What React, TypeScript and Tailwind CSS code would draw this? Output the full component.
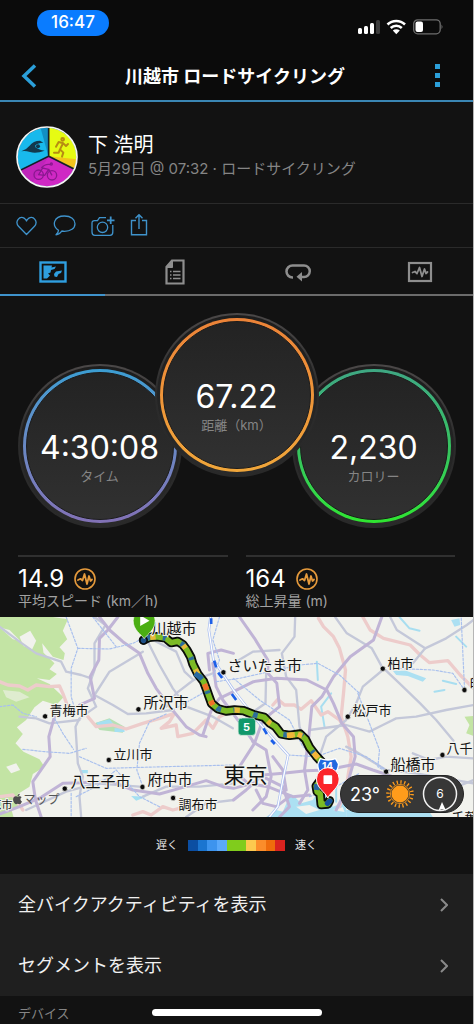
import React from 'react';
import { FaApple } from 'react-icons/fa';

const PACE_COLORS = [
  'bg-[#0b4ea2]',
  'bg-[#1b75d0]',
  'bg-[#3d94ee]',
  'bg-[#5aa9fb]',
  'bg-[#80cc1c]',
  'bg-[#80cc1c]',
  'bg-[#fcc94f]',
  'bg-[#fb8d2a]',
  'bg-[#ef6c0c]',
  'bg-[#d9231f]',
];

const CITIES = [
  { name: '川越市', x: 152, y: 17, size: 15 },
  { name: 'さいたま市', x: 228, y: 54, size: 15 },
  { name: '青梅市', x: 50, y: 98, size: 13 },
  { name: '所沢市', x: 144, y: 91, size: 15 },
  { name: '立川市', x: 114, y: 142, size: 13 },
  { name: '八王子市', x: 71, y: 170, size: 15 },
  { name: '府中市', x: 148, y: 168, size: 15 },
  { name: '調布市', x: 179, y: 192, size: 13 },
  { name: '東京', x: 224, y: 166, size: 22 },
  { name: '柏市', x: 388, y: 51, size: 13 },
  { name: '松戸市', x: 353, y: 98, size: 13 },
  { name: '船橋市', x: 391, y: 153, size: 15 },
  { name: '八千', x: 447, y: 136, size: 13 },
  { name: '印西市', x: 470, y: 71, size: 13 },
  { name: '千葉市', x: 452, y: 205, size: 13 },
  { name: '原市', x: -9, y: 192, size: 11 },
];

const CITY_DOTS = [
  [137, 319], [417, 298], [328, 450], [196, 536], [429, 531], [521, 564], [672, 187],
  [1150, 176], [1045, 320], [1329, 435], [1160, 485], [1395, 240],
];

const EXPRESSWAYS = [
  'M300 21 L330 60 370 95 420 130 445 190 470 235 515 295 560 350 600 375 620 380',
  'M355 21 L325 60 300 85 298 150 272 200 285 265 240 285',
  'M165 320 L148 380 152 440 100 515 108 570 125 621',
  'M0 612 L60 590 125 562 190 520 250 518 330 512 400 540 480 552 540 535 620 512 670 530 702 535 760 520',
  'M610 375 L632 310 640 290 660 265 702 245 762 215 832 205 922 210 982 240 1002 280 1027 340 1062 380 1067 440 1050 500 1040 540 1010 600',
  'M1147 21 L1122 90 1052 140 1002 200 967 260 937 290 928 380 915 480 925 540 900 580',
  'M720 21 L765 85 805 150 805 190 832 220 840 290 790 330 765 400 720 470',
  'M630 180 L625 130 665 120 702 130',
  'M640 160 L650 230 670 270 730 350 765 400',
  'M702 570 L740 540 790 495 850 490 920 482 980 480 1070 462 1120 480 1180 500 1250 520',
  'M760 395 L800 420 815 500 800 560 760 600',
  'M702 480 L745 520 805 530 880 560 930 555',
  'M800 505 L850 530 870 590 840 621',
  'M820 440 L850 480 860 540',
  'M770 540 L790 580 830 590 870 560',
];

const ROADS = [
  'M0 50 L60 95 110 130 185 155 200 185 245 195 275 205',
  'M285 21 L318 45 285 100 285 180 265 235 290 290 240 325 228 350 235 460 250 500 240 560 245 621',
  'M430 125 L330 185 285 255 340 285 385 312 440 310 520 300',
  'M445 95 L480 165 520 235 560 290 640 320 700 355',
  'M460 90 L530 125 555 185 582 210 530 250 500 290',
  'M582 210 L640 190',
  'M60 320 L110 325 150 340 240 330',
  'M430 560 L500 530 600 530 702 520',
  'M80 600 L200 545 290 520 420 530',
  'M560 621 L620 580 702 570',
  'M887 21 L885 80 847 130 860 200 890 240 900 350 925 420',
  'M702 160 L760 125 840 120',
  'M1007 21 L1042 70 1117 115 1147 170 1200 220 1262 280 1310 330 1362 392',
  'M1172 21 L1192 60 1277 115 1340 85 1402 45 1422 30',
  'M1277 115 L1240 160',
  'M1422 285 L1340 300 1250 320 1190 325 1150 345 1110 365 1040 345 930 360',
  'M1150 180 L1090 230 1070 280 1040 330 980 380 960 440',
  'M1422 445 L1340 440 1290 450 1240 430',
  'M1040 410 L1070 425 1160 480 1250 490 1422 520',
  'M800 190 L798 280 740 320',
  'M1300 560 L1422 510',
];

const BORDERS = [
  'M0 215 L25 225 60 228 85 240 110 225 150 230 180 228 192 255 205 290',
  'M265 320 L290 350 340 345 380 357 430 340 480 325 525 310 510 335 485 355 530 345 535 380 580 370 620 330 640 355 660 320 702 300',
  'M820 285 L835 268 855 285 885 285 905 298 935 272 965 315 985 305 1020 330 1045 365',
  'M957 25 L972 50 1002 80 1020 115 1038 180 1032 250 1025 320 1045 380 1055 440 1042 520 1020 590',
  'M1090 21 L1112 60 1152 85 1232 105 1262 135 1290 158 1345 152 1382 195 1422 235',
  'M400 615 L430 605 455 615 490 590 520 600 560 590',
  'M0 560 L40 555 70 600',
];

const RAILWAYS = [
  'M200 21 L235 115 215 175 215 260 230 310',
  'M235 115 L330 117 400 100 430 85',
  'M0 290 L40 285 70 310 110 320',
  'M70 418 L135 425 210 430 260 415',
  'M165 325 L190 370 222 418',
  'M240 440 L320 475 500 470 702 465',
  'M500 312 L450 335 420 400 412 480 430 530',
  'M230 560 L290 530 350 480 420 560 480 590',
  'M520 300 L600 255 630 235',
  'M215 550 L215 621',
  'M660 21 L640 90 660 150 640 200',
  'M650 215 L720 205 900 165 955 160 1020 195 1080 250',
  'M1190 175 L1300 180 1360 190 1395 240',
  'M1395 235 L1385 21',
  'M1075 250 L1110 340 1140 420 1135 470 1160 485',
  'M702 205 L780 270 870 330 910 410 960 440',
  'M865 435 L950 440 1020 415 1100 440 1160 480',
  'M930 560 L1010 530 1080 490',
  'M280 21 L350 110',
];

const ROUTE =
  'M432 90 L450 82 470 80 498 84 515 98 535 94 550 104 562 120 574 142 580 162 595 192 612 214 620 235 628 258 636 280 655 296 680 303 705 300 732 302 762 314 794 322 812 340 828 350 845 372 870 376 902 372 918 388 930 412 950 438 972 462 985 485';

const ROUTE_END = 'M960 515 L950 528 953 545 962 552 965 584 985 582 990 572';

function StatusBar() {
  return (
    <div className="flex items-start justify-between pt-[10px] pr-[30px] pl-[37px]">
      <div className="flex h-[26px] w-[72px] items-center justify-center rounded-full bg-[#0a7cff] text-[17px] font-medium">
        16:47
      </div>
      <svg width="86" height="16" viewBox="0 0 86 16" className="mt-[9px]" aria-hidden="true">
        <rect x="1" y="9" width="4" height="6" rx="1.500" fill="#fff" />
        <rect x="7" y="7" width="4" height="8" rx="1.500" fill="#fff" />
        <rect x="13" y="4" width="4" height="11" rx="1.500" fill="#fff" />
        <rect x="19" y="1" width="4" height="14" rx="1.500" fill="#3c3c3c" />
        <g fill="none" stroke="#fff" strokeWidth="2.600">
          <path d="M30.500 5.500 a12.500 12.500 0 0 1 17.500 0" />
          <path d="M33.700 9 a8 8 0 0 1 11.100 0" />
        </g>
        <path d="M35.800 11.600 a5 5 0 0 1 7 0 L39.300 15.300z" fill="#fff" />
        <rect x="56.700" y="0.800" width="26.500" height="14" rx="4" fill="none" stroke="#6e6e6e" strokeWidth="1.300" />
        <rect x="58.500" y="2.500" width="7.500" height="10.500" rx="2" fill="#fff" />
        <path d="M84.500 5.500 q2 2.300 0 4.600z" fill="#6e6e6e" />
      </svg>
    </div>
  );
}

function Avatar() {
  return (
    <svg width="62" height="62" viewBox="0 0 186 186" className="shrink-0" aria-hidden="true">
      <defs>
        <clipPath id="avatar">
          <circle cx="93" cy="93" r="88" />
        </clipPath>
      </defs>
      <g clipPath="url(#avatar)">
        <rect width="186" height="186" fill="#19b9ec" />
        <path d="M72 0 L98 0 98 93 Z" fill="#128fc4" />
        <path d="M98 0 H186 V135 L98 91z" fill="#e6fb13" />
        <path d="M98 91 L186 100 V140z" fill="#f3c31c" />
        <path d="M98 91 L0 140 V186 H186 V135z" fill="#cf28c4" />
        <path d="M0 140 L98 91 40 186z" fill="#b622b4" opacity="0.600" />
        <path d="M98 0 V91 L0 139 M98 91 L186 135" fill="none" stroke="#15202a" strokeWidth="5" />
        <path
          d="M16 76 Q30 72 40 60 Q52 44 72 44 L82 50 Q66 50 58 58 Q56 66 66 68 Q74 72 86 74 Q60 84 42 78 Q28 74 16 76z"
          fill="#12384c"
        />
        <circle cx="66" cy="61" r="6" fill="#12384c" />
        <g stroke="#b78d12" strokeWidth="6" fill="none" strokeLinecap="round" strokeLinejoin="round">
          <circle cx="140" cy="40" r="4" />
          <path d="M120 62 L128 48 142 52 150 60 156 54 M140 54 L132 70 142 80 138 92 M132 70 L128 80 114 80" />
        </g>
        <g stroke="#8a1890" strokeWidth="4" fill="none">
          <circle cx="68" cy="146" r="14" />
          <circle cx="108" cy="148" r="14" />
          <path d="M68 146 L80 126 98 130 86 148z M98 130 L108 148 M76 126 Q88 112 104 116" />
          <circle cx="106" cy="114" r="3" />
        </g>
      </g>
      <circle cx="93" cy="93" r="90" fill="none" stroke="#f5f5f5" strokeWidth="5" />
    </svg>
  );
}

function PulseLine({ d }: { d: string }) {
  return <path d={d} fill="none" stroke="currentColor" strokeWidth="1.800" strokeLinejoin="round" strokeLinecap="round" />;
}

function ActionBar() {
  return (
    <div className="flex h-11 items-center gap-[15px] border-b border-[#2a2a2a] pl-[15px] text-[#3f93cc]">
      <button type="button" aria-label="いいね">
        <svg width="23" height="24" viewBox="0 0 23 24" fill="none" stroke="currentColor" strokeWidth="1.300">
          <path d="M11.500 20.500 L3.500 12.300 C-0.500 7.500 4.500 1 9.500 4.400 Q11 5.500 11.500 7 Q12 5.500 13.500 4.400 C18.500 1 23.500 7.500 19.500 12.300 z" strokeLinejoin="round" />
        </svg>
      </button>
      <button type="button" aria-label="コメント">
        <svg width="23" height="24" viewBox="0 0 23 24" fill="none" stroke="currentColor" strokeWidth="1.300">
          <path d="M5.500 16.300 C-1.500 11.500 0.500 2 11.500 2 C18 2 22 5.500 22 9.700 C22 14.500 17.500 17.300 11.500 17.300 Q10 17.300 8.800 17 Q6.500 20.500 3 20.800 Q5.500 18.800 5.500 16.300z" strokeLinejoin="round" />
        </svg>
      </button>
      <button type="button" aria-label="写真を追加">
        <svg width="24" height="24" viewBox="0 0 24 24" fill="none" stroke="currentColor" strokeWidth="1.300">
          <path d="M15 3.700 H8.500 L6.500 6.700 H3.500 Q1 6.700 1 9 V18 Q1 21.300 3.800 21.300 H19 Q21.800 21.300 21.800 18 V11" />
          <circle cx="11.500" cy="13.300" r="5.200" />
          <path d="M19.700 2.500 V10 M16 6.300 H23.500" strokeWidth="1.800" />
        </svg>
      </button>
      <button type="button" aria-label="共有">
        <svg width="18" height="24" viewBox="0 0 18 24" fill="none" stroke="currentColor" strokeWidth="1.400">
          <path d="M6 6.500 H1.500 V20.700 H16.500 V6.500 H12 M9 15 V1 M5.500 4.300 L9 0.700 12.500 4.300" />
        </svg>
      </button>
    </div>
  );
}

function Tabs() {
  return (
    <div role="tablist" className="flex h-12 justify-between border-b-2 border-[#6b6b6b] text-[#8e8e8e]">
      <button
        type="button"
        role="tab"
        aria-selected="true"
        aria-label="概要"
        className="-mb-[2px] flex w-[105px] items-center justify-center border-b-2 border-[#3f93cc] pt-[2px] text-[#2f9fe0]"
      >
        <svg width="28" height="22" viewBox="0 0 28 22">
          <rect x="1.500" y="1.500" width="25" height="19" fill="none" stroke="currentColor" strokeWidth="2.400" />
          <path d="M4.500 4.500 H13 L12.500 6.500 17 5.500 15.500 8 12 9 11.500 11.500 9 12.500 11 14.500 8 17.500 H4.500z" fill="currentColor" />
          <path d="M15 13 L17 10.500 23 9.500 22 12 19.500 13 18 16 15.500 15.500z" fill="currentColor" />
        </svg>
      </button>
      <button type="button" role="tab" aria-selected="false" aria-label="詳細" className="flex w-[105px] items-center justify-center pt-[2px]">
        <svg width="20" height="26" viewBox="0 0 20 26" fill="none" stroke="currentColor">
          <path d="M7 1.500 H18.500 V24.500 H1.500 V8z" strokeWidth="2.200" />
          <path d="M1.500 8.500 L7.500 1.500 V8.500z" fill="currentColor" />
          <path d="M5 12.500 H6.500 M8 12.500 H15.500 M5 16 H6.500 M8 16 H15.500 M5 19.500 H6.500 M8 19.500 H15.500" strokeWidth="1.700" />
        </svg>
      </button>
      <button type="button" role="tab" aria-selected="false" aria-label="ラップ" className="flex w-[105px] items-center justify-center pt-[2px]">
        <svg width="26" height="20" viewBox="0 0 26 20" fill="none" stroke="currentColor">
          <path d="M8 15.500 H7.500 A5.600 5.600 0 0 1 7.500 3.500 H19 A5.600 5.600 0 0 1 19 15 H15" strokeWidth="2.500" />
          <path d="M17 10 V19.500 L11.500 14.800z" fill="currentColor" stroke="none" />
        </svg>
      </button>
      <button type="button" role="tab" aria-selected="false" aria-label="グラフ" className="flex w-[105px] items-center justify-center pt-[2px]">
        <svg width="26" height="22" viewBox="0 0 26 22">
          <rect x="2" y="2" width="22" height="18" fill="none" stroke="currentColor" strokeWidth="2.200" />
          <PulseLine d="M5.500 11.500 L8 10.500 10 12.500 12.500 6.500 15 15.500 17.500 8 19 12.500 20.500 11" />
        </svg>
      </button>
    </div>
  );
}

interface GaugeProps {
  value: string;
  label: string;
  ring: string;
  className: string;
}

function Gauge({ value, label, ring, className }: GaugeProps) {
  return (
    <div className={`size-[164px] shrink-0 rounded-full bg-linear-to-b from-[#4b4848] via-[#2b2b2b] to-[#292929] p-[2px] ${className}`}>
      <div className="size-full rounded-full bg-linear-to-b from-[#1d1d1d] to-[#2a2a2a] p-[3px]">
        <div className={`size-full rounded-full bg-linear-to-b p-[3px] ${ring}`}>
          <div className="flex size-full flex-col items-center rounded-full border border-[#1b1b1b] bg-linear-to-b from-[#232323] to-[#313131] pt-[55px]">
            <span className="text-[32px] leading-10">{value}</span>
            <span className="text-[13px] leading-4 text-[#858585]">{label}</span>
          </div>
        </div>
      </div>
    </div>
  );
}

function Stat({ value, label }: { value: string; label: string }) {
  return (
    <div className="flex-1 border-t-2 border-[#303030] pt-2">
      <div className="flex items-center gap-[10px] text-[24px] leading-7">
        {value}
        <svg width="22" height="22" viewBox="0 0 22 22" className="text-[#e59a3c]" aria-hidden="true">
          <circle cx="11" cy="11" r="10" fill="none" stroke="currentColor" strokeWidth="1.600" />
          <PulseLine d="M4 12 L6.500 10.800 8.500 12.500 10.500 6 13 16 15 8 16.500 13 18 11.500" />
        </svg>
      </div>
      <div className="text-[14px] leading-4 text-[#a2a2a2]">{label}</div>
    </div>
  );
}

function RouteMap() {
  return (
    <svg viewBox="0 0 474 200" preserveAspectRatio="xMidYMid slice" className="h-[200px] w-full bg-[#f1f2ed]">
      <g transform="translate(0 -7) scale(0.33333)" fill="none" strokeLinejoin="round" strokeLinecap="round">
        <g fill="#c3e4a4">
          <path d="M0 21 H160 L205 28 190 62 203 88 180 112 196 130 192 150 160 140 128 100 132 128 165 160 150 178 172 192 150 210 112 205 150 222 192 262 170 285 130 272 105 292 80 330 52 352 70 372 48 400 72 425 120 448 135 470 100 492 90 530 55 552 66 585 36 600 42 621 H0z" />
          <path d="M1395 320 L1422 318 V378 L1400 370 1410 345z" />
        </g>
        <g fill="#f1f2ed">
          <path d="M60 80 L92 62 110 92 98 118 72 108z" />
          <path d="M10 240 L60 245 90 262 50 275 20 262z" opacity="0.600" />
          <path d="M0 52 L30 60 62 92 40 88z" />
          <path d="M20 470 L50 460 62 480 35 490z" />
        </g>
        <path d="M285 340 L330 325 375 350 370 368 300 360z" fill="#b8e0b4" />
        <path d="M290 338 L330 328 345 345 300 350z M345 355 H375 V366 H345z M395 558 L440 560 410 572z M245 480 h20 v10 h-20z" fill="#a5e0f2" />
        <g fill="#ace0f2">
          <path d="M800 621 L830 600 850 605 865 570 855 550 880 555 905 580 940 570 955 545 965 520 1000 590 1040 575 1040 621z" />
          <path d="M1040 600 L1100 600 1290 606 1300 621 H1040z" />
          <path d="M1180 182 L1220 182 1280 205 1270 215 1225 198 1190 195z" />
          <path d="M1355 30 L1380 25 1382 45 1365 50z" />
        </g>
        <g stroke="#a8def0" strokeWidth="6">
          <path d="M952 155 L955 210 M995 250 L965 290 975 350 M1200 21 L1230 55 1260 62 M1305 245 L1335 240 M1330 212 L1370 222 M1370 80 L1400 110" />
          <path d="M1010 575 L1010 500" />
        </g>
        <path d="M890 590 L930 585 960 600 920 612z M1000 600 L1030 592 1035 606z" fill="#f1f2ed" />
        <g stroke="#edcccb" strokeWidth="10">
          {BORDERS.map((d) => <path key={d} d={d} />)}
        </g>
        <g stroke="#c4c8d9" strokeWidth="7">
          {ROADS.map((d) => <path key={d} d={d} />)}
        </g>
        <g stroke="#c0b4d6" strokeWidth="9">
          {EXPRESSWAYS.map((d) => <path key={d} d={d} />)}
        </g>
        <g stroke="#a9c0ee" strokeWidth="3.500" strokeDasharray="7 5">
          {RAILWAYS.map((d) => <path key={d} d={d} />)}
        </g>
        <path d="M633 21 L628 60 642 150 702 240 780 340 866 435 850 510 835 590 810 621" stroke="#a8bdf0" strokeWidth="8" />
        <path d="M633 21 L628 60 642 150 702 240 780 340 866 435 850 510 835 590 810 621" stroke="#fff" strokeWidth="4" />
        <path d="M635 25 V42 M644 152 L650 172 M656 188 L668 204 M697 252 L710 270 M792 355 L802 372 M815 390 L826 402" stroke="#1c5fe8" strokeWidth="8" strokeLinecap="butt" />

        <g stroke="#0a0d0a" strokeWidth="28">
          <path d={ROUTE} />
          <path d={ROUTE_END} />
        </g>
        <g stroke="#7cbb25" strokeWidth="17">
          <path d={ROUTE} />
          <path d={ROUTE_END} />
        </g>
        <g strokeWidth="16" strokeLinecap="butt">
          <path d={ROUTE} stroke="#2d6d9a" strokeDasharray="9 52 14 38" strokeDashoffset="-60" />
          <path d={ROUTE} stroke="#e8b93a" strokeDasharray="12 70 16 92" strokeDashoffset="-130" />
          <path d="M615 222 L622 240 M634 272 L640 285" stroke="#f0702a" />
          <path d="M586 190 L606 205 M952 522 L951 540" stroke="#2a68a0" />
          <path d="M862 376 L880 375 M895 373 L908 378 M942 428 L956 444" stroke="#f3b53a" />
        </g>
        <circle cx="432" cy="91" r="11" fill="#1d4f86" stroke="#0a0d0a" strokeWidth="5" />
        <path d="M984 580 L991 573" stroke="#174f9c" strokeWidth="16" />

        <g fill="#0b0b0b" stroke="#f1f2ed" strokeWidth="2">
          {CITY_DOTS.map(([x, y]) => <circle key={x} cx={x} cy={y} r="8" />)}
        </g>

        <rect x="716" y="324" width="52" height="52" rx="10" fill="#11986a" stroke="#d6eadf" strokeWidth="2" />
        <path d="M962 446 Q986 454 1008 446 L1017 462 Q1016 480 1004 492 L986 502 966 492 Q954 480 955 462z" fill="#2168e0" stroke="#fff" strokeWidth="4" />
      </g>

      <text x="328" y="153" textAnchor="middle" className="fill-white font-bold" fontSize="10">14</text>
      <text x="247" y="114" textAnchor="middle" className="fill-white font-bold" fontSize="11">5</text>
      <g stroke="#f1f2ed" strokeWidth="2" paintOrder="stroke" className="fill-[#141414]">
        {CITIES.map((city) => (
          <text key={city.name} x={city.x} y={city.y} fontSize={city.size}>{city.name}</text>
        ))}
      </g>
      <FaApple x="12" y="176" size={12} color="#4c4c4c" />
      <text x="24" y="187" fontSize="12" className="fill-[#555]">マップ</text>

      <g transform="translate(0 -7) scale(0.33333)">
        <path d="M434 86 C424 72 401 60 401 32 A33 33 0 0 1 467 32 C467 60 444 72 434 86z" fill="#4aae12" stroke="#fff" strokeWidth="2" />
        <path d="M422 16 L450 32 422 48z" fill="#fff" />
        <path d="M985 564 C975 544 951 534 951 507 A34 34 0 0 1 1019 507 C1019 534 995 544 985 564z" fill="#fb2429" stroke="#fff" strokeWidth="3" />
        <rect x="972" y="496" width="26" height="26" rx="2" fill="#fff" />
      </g>
    </svg>
  );
}

function WeatherBadge() {
  return (
    <div className="absolute right-[9px] bottom-1 flex h-[38px] w-[124px] items-center gap-[5px] rounded-full border border-[#242424] bg-[#373737] pl-[9px]">
      <span className="text-[18px]">23°</span>
      <svg width="30" height="30" viewBox="0 0 30 30" aria-hidden="true">
        <circle cx="15" cy="15" r="8.500" fill="#ff9c1b" />
        <circle cx="15" cy="15" r="9.600" fill="none" stroke="#ff9c1b" strokeWidth="0.800" />
        <circle cx="15" cy="15" r="12" fill="none" stroke="#ff9c1b" strokeWidth="3.600" strokeDasharray="1.300 2.470" />
      </svg>
      <svg width="36" height="36" viewBox="0 0 36 36" className="ml-[2px]" aria-hidden="true">
        <circle cx="18" cy="18" r="16.500" fill="none" stroke="#f2f2f2" strokeWidth="1.500" />
        <path d="M20 26 L24 34.500 20 33 16.500 34.500z" fill="#fff" />
        <text x="18" y="22" textAnchor="middle" fontSize="12" fill="#fff">6</text>
      </svg>
    </div>
  );
}

function LinkRow({ label }: { label: string }) {
  return (
    <a href="#" className="flex h-[61px] items-center justify-between pr-[25px] pl-[18px] text-[18px] text-[#f0f0f0]">
      {label}
      <svg width="8" height="14" viewBox="0 0 8 14" fill="none" stroke="#8a8a8a" strokeWidth="2" aria-hidden="true">
        <path d="M1 1 L7 7 1 13" />
      </svg>
    </a>
  );
}

export default function App() {
  return (
    <div className="min-h-screen border-r border-[#b5b5b5] bg-[#121212] font-['Inter','Noto_Sans_CJK_JP',sans-serif] text-white">
      <header className="h-[102px] border-b-2 border-[#3a86b4] bg-[#0b0b0b]">
        <StatusBar />
        <div className="mt-[22px] flex h-9 items-center justify-between pr-7 pl-[21px]">
          <button type="button" aria-label="戻る">
            <svg width="16" height="24" viewBox="0 0 16 24" fill="none" stroke="#2b9fd9" strokeWidth="3.500">
              <path d="M14 1.500 L3 12 14 22.500" />
            </svg>
          </button>
          <h1 className="text-[18px] font-bold">川越市 ロードサイクリング</h1>
          <button type="button" aria-label="メニュー">
            <svg width="12" height="24" viewBox="0 0 12 24" fill="#2b9fd9">
              <rect x="2" y="0" width="5" height="5" />
              <rect x="2" y="9" width="5" height="5" />
              <rect x="2" y="18" width="5" height="5" />
            </svg>
          </button>
        </div>
      </header>

      <section className="flex h-[102px] items-center gap-[10px] border-b border-[#2a2a2a] pt-2 pl-4">
        <Avatar />
        <div>
          <div className="text-[20px] leading-6">下 浩明</div>
          <div className="text-[15px] leading-6 text-[#858585]">5月29日 @ 07:32 · ロードサイクリング</div>
        </div>
      </section>

      <ActionBar />
      <Tabs />

      <section className="flex justify-center pt-[17px]">
        <Gauge value="4:30:08" label="タイム" ring="from-[#3b9ed3] to-[#8171b5]" className="mt-[51px]" />
        <Gauge value="67.22" label="距離（km）" ring="from-[#ec8338] to-[#f0a63a]" className="relative z-10 -mx-[27px]" />
        <Gauge value="2,230" label="カロリー" ring="from-[#3fa783] via-[#37c260] to-[#2fe52f]" className="mt-[51px]" />
      </section>

      <section className="mt-[27px] flex gap-[18px] px-[18px] pb-2">
        <Stat value="14.9" label="平均スピード (km／h)" />
        <Stat value="164" label="総上昇量 (m)" />
      </section>

      <section className="relative overflow-hidden">
        <RouteMap />
        <WeatherBadge />
      </section>

      <section className="flex h-[57px] items-center justify-center gap-[10px] text-[11px] text-[#e8e8e8]">
        <span>遅く</span>
        <div className="flex h-[11px] w-[97px]">
          {PACE_COLORS.map((color, i) => <div key={i} className={`flex-1 ${color}`} />)}
        </div>
        <span>速く</span>
      </section>

      <nav className="bg-[#1f1f1f]">
        <LinkRow label="全バイクアクティビティを表示" />
        <LinkRow label="セグメントを表示" />
      </nav>

      <footer className="relative h-7 overflow-hidden pt-[7px] pl-[18px]">
        <div className="text-[13px] leading-5 text-[#858585]">デバイス</div>
        <div className="absolute bottom-2 left-1/2 h-[7px] w-[170px] -translate-x-1/2 rounded-full bg-white" />
      </footer>
    </div>
  );
}
